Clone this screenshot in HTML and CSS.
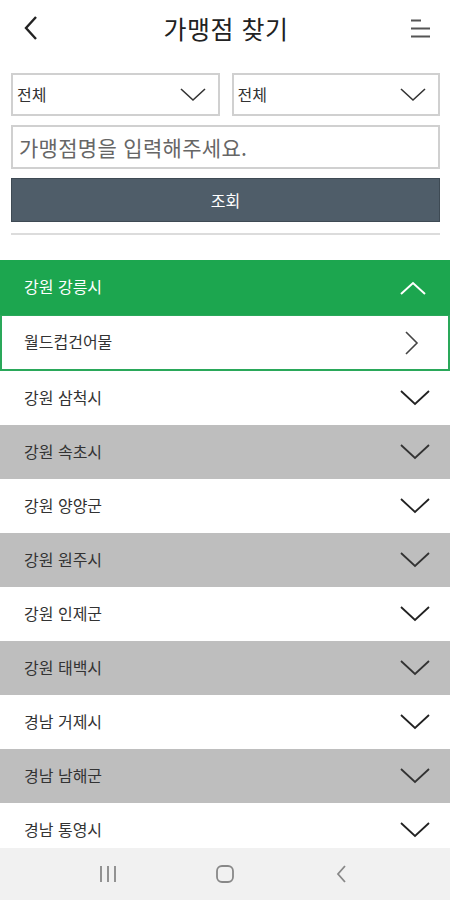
FILE: index.html
```html
<!DOCTYPE html>
<html lang="ko">
<head>
<meta charset="utf-8">
<title>가맹점 찾기</title>
<link rel="stylesheet" href="styles.css">
</head>
<body>
<div class="page">
  <header class="topbar">
    <svg class="back" width="20" height="26" viewBox="0 0 20 26"><path d="M15 2 L5 13 L15 24" fill="none" stroke="#222" stroke-width="2.4"/></svg>
    <h1 class="title">가맹점 찾기</h1>
    <svg class="menu" width="24" height="24" viewBox="0 0 24 24"><path d="M2 4.5 H12 M2 12.5 H21 M2 20.5 H21" stroke="#555" stroke-width="2.2"/></svg>
  </header>

  <section class="search">
    <div class="selects">
      <div class="select"><span>전체</span><svg width="26" height="14" viewBox="0 0 26 14"><path d="M1 1 L13 12 L25 1" fill="none" stroke="#333" stroke-width="1.6"/></svg></div>
      <div class="select"><span>전체</span><svg width="26" height="14" viewBox="0 0 26 14"><path d="M1 1 L13 12 L25 1" fill="none" stroke="#333" stroke-width="1.6"/></svg></div>
    </div>
    <div class="input">가맹점명을 입력해주세요.</div>
    <div class="btn">조회</div>
    <div class="divider"></div>
  </section>

  <ul class="list">
    <li class="row open"><span>강원 강릉시</span><svg width="28" height="16" viewBox="0 0 28 16"><path d="M2 14 L14 3 L26 14" fill="none" stroke="#fff" stroke-width="2"/></svg></li>
    <li class="row sub"><span>월드컵건어물</span><svg width="16" height="26" viewBox="0 0 16 26"><path d="M2 2 L13 13 L2 24" fill="none" stroke="#444" stroke-width="1.6"/></svg></li>
    <li class="row"><span>강원 삼척시</span><svg class="down" width="30" height="16" viewBox="0 0 30 16"><path d="M1 1 L15 14 L29 1" fill="none" stroke="#222" stroke-width="1.8"/></svg></li>
    <li class="row alt"><span>강원 속초시</span><svg class="down" width="30" height="16" viewBox="0 0 30 16"><path d="M1 1 L15 14 L29 1" fill="none" stroke="#333" stroke-width="1.8"/></svg></li>
    <li class="row"><span>강원 양양군</span><svg class="down" width="30" height="16" viewBox="0 0 30 16"><path d="M1 1 L15 14 L29 1" fill="none" stroke="#222" stroke-width="1.8"/></svg></li>
    <li class="row alt"><span>강원 원주시</span><svg class="down" width="30" height="16" viewBox="0 0 30 16"><path d="M1 1 L15 14 L29 1" fill="none" stroke="#333" stroke-width="1.8"/></svg></li>
    <li class="row"><span>강원 인제군</span><svg class="down" width="30" height="16" viewBox="0 0 30 16"><path d="M1 1 L15 14 L29 1" fill="none" stroke="#222" stroke-width="1.8"/></svg></li>
    <li class="row alt"><span>강원 태백시</span><svg class="down" width="30" height="16" viewBox="0 0 30 16"><path d="M1 1 L15 14 L29 1" fill="none" stroke="#333" stroke-width="1.8"/></svg></li>
    <li class="row"><span>경남 거제시</span><svg class="down" width="30" height="16" viewBox="0 0 30 16"><path d="M1 1 L15 14 L29 1" fill="none" stroke="#222" stroke-width="1.8"/></svg></li>
    <li class="row alt"><span>경남 남해군</span><svg class="down" width="30" height="16" viewBox="0 0 30 16"><path d="M1 1 L15 14 L29 1" fill="none" stroke="#333" stroke-width="1.8"/></svg></li>
    <li class="row"><span>경남 통영시</span><svg class="down" width="30" height="16" viewBox="0 0 30 16"><path d="M1 1 L15 14 L29 1" fill="none" stroke="#222" stroke-width="1.8"/></svg></li>
  </ul>

  <nav class="navbar">
    <svg width="20" height="18" viewBox="0 0 20 18"><path d="M3 1 V17 M10 1 V17 M17 1 V17" stroke="#888" stroke-width="1.8"/></svg>
    <svg width="20" height="20" viewBox="0 0 20 20"><rect x="2" y="2" width="16" height="16" rx="5" fill="none" stroke="#888" stroke-width="1.8"/></svg>
    <svg width="20" height="20" viewBox="0 0 20 20"><path d="M13 2 L6 10 L13 18" fill="none" stroke="#888" stroke-width="1.8"/></svg>
  </nav>
</div>
</body>
</html>
```

FILE: styles.css
```css
* { box-sizing: border-box; }
html, body { margin: 0; padding: 0; }
body {
  font-family: "Noto Sans CJK KR", "Noto Sans", sans-serif;
  background: #fff;
  color: #333;
}
.page {
  width: 450px;
  height: 900px;
  display: flex;
  flex-direction: column;
  overflow: hidden;
}
.topbar {
  height: 56px;
  display: grid;
  grid-template-columns: 60px 1fr 60px;
  align-items: center;
  padding: 0;
}
.back { margin-left: 21px; }
.menu { justify-self: end; margin-right: 17px; }
.title {
  margin: 0;
  font-size: 25px;
  font-weight: 400;
  color: #222;
  letter-spacing: 0.5px;
  text-align: center;
  padding-left: 2px;
}

.search {
  padding: 17px 10px 0 11px;
  display: flex;
  flex-direction: column;
}
.selects {
  display: flex;
  gap: 12px;
}
.select {
  flex: 1;
  height: 43px;
  border: 2px solid #d0d0d0;
  display: flex;
  align-items: center;
  justify-content: space-between;
  padding: 0 12px 0 4px;
  font-size: 16px;
  color: #333;
}
.select span { margin-top: -2px; }
.input {
  margin-top: 9px;
  height: 44px;
  border: 2px solid #d0d0d0;
  display: flex;
  align-items: center;
  padding: 0 6px;
  font-size: 21px;
  color: #666;
  letter-spacing: 0.3px;
}
.btn {
  margin-top: 9px;
  height: 44px;
  background: #4f5d69;
  color: #fff;
  display: flex;
  align-items: center;
  justify-content: center;
  font-size: 16px;
  border: 1px solid #3e4a54;
}
.divider {
  margin-top: 11px;
  height: 2px;
  background: #dcdcdc;
}

.list {
  list-style: none;
  margin: 25px 0 0;
  padding: 0;
  flex: 1;
  overflow: hidden;
}
.row {
  height: 54px;
  display: flex;
  align-items: center;
  justify-content: space-between;
  padding: 0 20px 0 24px;
  font-size: 16px;
  color: #333;
}
.row span { margin-top: -3px; }
.row.alt { background: #bebebe; }
.row.open {
  background: #1ca64f;
  color: #fff;
  height: 55px;
  padding-right: 23px;
}
.row.sub {
  height: 56px;
  border: 2px solid #2aa85a;
  border-top-width: 1px;
  padding: 0 28px 0 22px;
}

.navbar {
  height: 52px;
  background: #f1f1f1;
  display: flex;
  align-items: center;
  justify-content: center;
  gap: 97px;
  flex-shrink: 0;
}
```
